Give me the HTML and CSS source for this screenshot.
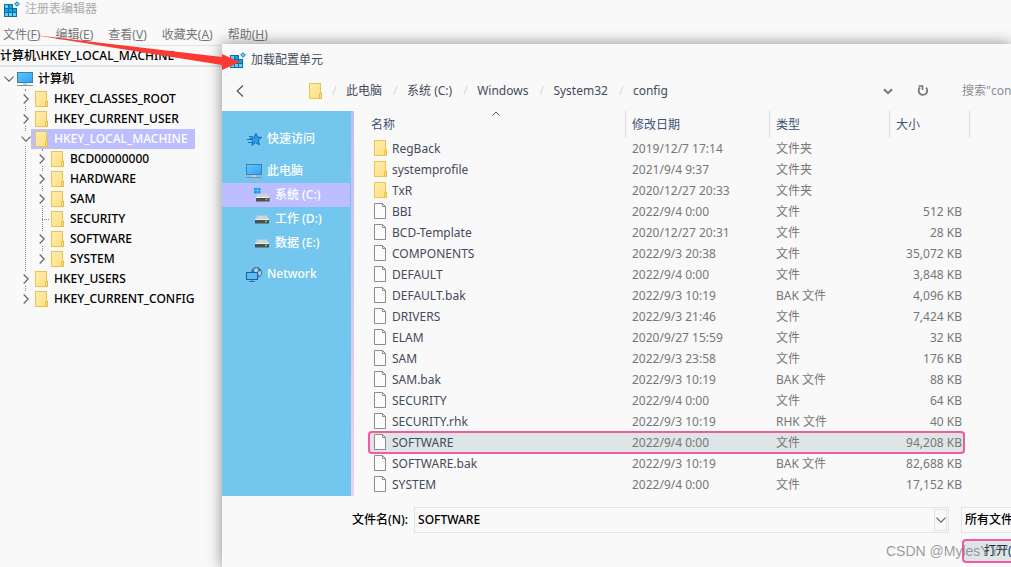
FILE: index.html
```html
<!DOCTYPE html>
<html lang="zh-CN">
<head>
<meta charset="utf-8">
<title>注册表编辑器</title>
<link rel="stylesheet" href="styles.css">
</head>
<body>
<svg class="defs" aria-hidden="true">
  <defs>
    <linearGradient id="fold" x1="0" y1="0" x2="1" y2="1"><stop offset="0" stop-color="#ffedae"/><stop offset="1" stop-color="#ffdf80"/></linearGradient>
    <linearGradient id="scr" x1="0" y1="0" x2="1" y2="1"><stop offset="0" stop-color="#5fc8ff"/><stop offset="1" stop-color="#2ba4f5"/></linearGradient>
    <symbol id="i-folder" viewBox="0 0 14 16">
      <rect x="0.5" y="0.5" width="11" height="15" fill="url(#fold)" stroke="#eac54f"/>
      <path d="M10.5 15.5v-4.5l2-1v5.5z" fill="#ffe48f" stroke="#e6bd3f"/>
    </symbol>
    <symbol id="i-file" viewBox="0 0 12 16">
      <path d="M0.5 0.5h8l3 3v12h-11z" fill="#fcfcfc" stroke="#8c8c8c"/>
      <path d="M8.5 0.5v3h3" fill="none" stroke="#8c8c8c"/>
    </symbol>
    <symbol id="i-pc" viewBox="0 0 16 15">
      <rect x="0.5" y="0.5" width="15" height="10" fill="url(#scr)" stroke="#4a7ea0"/>
      <path d="M6 11h4v2h-4z" fill="#bcd3df"/><path d="M0 13.5h16" stroke="#7d929f"/>
    </symbol>
    <symbol id="i-reg" viewBox="0 0 16 16">
      <rect x="0" y="3" width="13" height="13" fill="#0b6fa0"/>
      <path d="M1 4h3v3H1zM5 4h3v3H5zM1 8h3v3H1zM5 8h3v3H5zM9 8h3v3H9zM1 12h3v3H1zM5 12h3v3H5zM9 12h3v3H9z" fill="#12a5dd"/>
      <path d="M1 4h3v3H1zM1 12h3v3H1zM5 12h3v3H5zM9 12h3v3H9z" fill="#5ed3fb"/>
      <path d="M9 2h5v5H9z" fill="#f9f9f9"/>
      <path d="M13 0.700l2.300 2.300-2.300 2.300-2.300-2.300z" fill="#5ed3fb" stroke="#0d7cb0"/>
    </symbol>
    <symbol id="i-drive" viewBox="0 0 14 9">
      <path d="M2.500 0.500h9l2.500 4H0z" fill="#d0d3d4"/><rect x="0" y="4" width="14" height="4.500" rx="0.500" fill="#4a4f51"/><path d="M0 4.500h14" stroke="#f0f0f0"/>
      <path d="M10 6.500h2" stroke="#54e552" stroke-width="1.500"/>
    </symbol>
    <symbol id="i-cdrive" viewBox="0 0 16 14">
      <path d="M4 5.500h9l2.500 4H2z" fill="#d0d3d4"/><rect x="2" y="9" width="13.500" height="4.500" rx="0.500" fill="#4a4f51"/><path d="M2 9.500h13.500" stroke="#f0f0f0"/>
      <path d="M0 0h3v2.500H0zM3.500 0h3v2.500h-3zM0 3h3v2.500H0zM3.500 3h3v2.500h-3z" fill="#00a4ef"/>
      <path d="M11.500 11.500h2" stroke="#54e552" stroke-width="1.500"/>
    </symbol>
    <symbol id="i-star" viewBox="0 0 15 13">
      <path d="M9 0.500l1.400 3.700 4.100.2-3.200 2.500 1 4.900-3.700-2.300-3.700 2.800 1.100-4.600-3.200-2.300 4.300-.6z" fill="#2f9ef0" stroke="#0968b0"/>
      <path d="M2 3.500h4M0 6.500h4M1 9.500h4" stroke="#1478c4"/>
    </symbol>
    <symbol id="i-net" viewBox="0 0 16 15">
      <circle cx="10.500" cy="5.500" r="5" fill="#4187ad" stroke="#356f91"/>
      <path d="M8 2l3-1 1 3-3 2zM12 5l3-1v3l-2 2z" fill="#b5dcec"/>
      <rect x="0.500" y="5.500" width="11" height="7" fill="#59bdf7" stroke="#235d91"/><path d="M3 14.500h6M6 12v2" stroke="#476f87"/>
    </symbol>
    <symbol id="i-right" viewBox="0 0 6 10"><path d="M0.700 0.500l4.500 4.500-4.500 4.500" fill="none" stroke="#666" stroke-width="1.200"/></symbol>
    <symbol id="i-down" viewBox="0 0 10 6"><path d="M0.500 0.700l4.500 4.500 4.500-4.500" fill="none" stroke="#666" stroke-width="1.200"/></symbol>
  </defs>
</svg>

<main class="editor">
  <header class="titlebar"><svg class="ic16"><use href="#i-reg"/></svg><span>注册表编辑器</span></header>
  <nav class="menu">
    <button>文件(<u>F</u>)</button><button>编辑(<u>E</u>)</button><button>查看(<u>V</u>)</button><button>收藏夹(<u>A</u>)</button><button>帮助(<u>H</u>)</button>
  </nav>
  <input class="address" aria-label="地址" value="计算机\HKEY_LOCAL_MACHINE">
  <ul class="tree">
    <li><div class="node root"><button class="tw" aria-label="折叠"><svg class="down"><use href="#i-down"/></svg></button><svg class="pc"><use href="#i-pc"/></svg><span>计算机</span></div>
      <ul>
        <li><div class="node"><button class="tw" aria-label="展开"><svg class="right"><use href="#i-right"/></svg></button><svg class="folder"><use href="#i-folder"/></svg><span>HKEY_CLASSES_ROOT</span></div></li>
        <li><div class="node"><button class="tw" aria-label="展开"><svg class="right"><use href="#i-right"/></svg></button><svg class="folder"><use href="#i-folder"/></svg><span>HKEY_CURRENT_USER</span></div></li>
        <li><div class="node"><button class="tw" aria-label="折叠"><svg class="down"><use href="#i-down"/></svg></button><div class="picked"><svg class="folder"><use href="#i-folder"/></svg><span>HKEY_LOCAL_MACHINE</span></div></div>
          <ul>
            <li><div class="node"><button class="tw" aria-label="展开"><svg class="right"><use href="#i-right"/></svg></button><svg class="folder"><use href="#i-folder"/></svg><span>BCD00000000</span></div></li>
            <li><div class="node"><button class="tw" aria-label="展开"><svg class="right"><use href="#i-right"/></svg></button><svg class="folder"><use href="#i-folder"/></svg><span>HARDWARE</span></div></li>
            <li><div class="node"><button class="tw" aria-label="展开"><svg class="right"><use href="#i-right"/></svg></button><svg class="folder"><use href="#i-folder"/></svg><span>SAM</span></div></li>
            <li><div class="node"><i class="leaf"></i><svg class="folder"><use href="#i-folder"/></svg><span>SECURITY</span></div></li>
            <li><div class="node"><button class="tw" aria-label="展开"><svg class="right"><use href="#i-right"/></svg></button><svg class="folder"><use href="#i-folder"/></svg><span>SOFTWARE</span></div></li>
            <li><div class="node"><button class="tw" aria-label="展开"><svg class="right"><use href="#i-right"/></svg></button><svg class="folder"><use href="#i-folder"/></svg><span>SYSTEM</span></div></li>
          </ul></li>
        <li><div class="node"><button class="tw" aria-label="展开"><svg class="right"><use href="#i-right"/></svg></button><svg class="folder"><use href="#i-folder"/></svg><span>HKEY_USERS</span></div></li>
        <li><div class="node"><button class="tw" aria-label="展开"><svg class="right"><use href="#i-right"/></svg></button><svg class="folder"><use href="#i-folder"/></svg><span>HKEY_CURRENT_CONFIG</span></div></li>
      </ul></li>
  </ul>
</main>

<section class="dialog" role="dialog" aria-label="加载配置单元">
  <header class="dialog-title"><svg class="ic16"><use href="#i-reg"/></svg><span>加载配置单元</span></header>
  <div class="navbar">
    <button class="back" aria-label="返回"><svg viewBox="0 0 8 12"><path d="M7 0.500L1.200 6L7 11.500" fill="none" stroke="#555" stroke-width="1.200"/></svg></button>
    <svg class="folder"><use href="#i-folder"/></svg>
    <ol class="crumbs"><li><a href="#">此电脑</a></li><li><a href="#">系统 (C:)</a></li><li><a href="#">Windows</a></li><li><a href="#">System32</a></li><li><a href="#">config</a></li></ol>
    <button class="hist" aria-label="历史"><svg viewBox="0 0 10 7"><path d="M1 1.200l4 4 4-4" fill="none" stroke="#777" stroke-width="2"/></svg></button>
    <button class="reload" aria-label="刷新"><svg viewBox="0 0 12 12"><path d="M3 2.500A4.300 4.300 0 1 0 9 2.600" fill="none" stroke="#777" stroke-width="1.800"/><path d="M1.500 1h4v4" fill="none" stroke="#777" stroke-width="1.600"/></svg></button>
    <input class="search" aria-label="搜索" placeholder='搜索"config"'>
  </div>
  <div class="content">
    <nav class="places">
      <a href="#" class="place"><svg class="star"><use href="#i-star"/></svg>快速访问</a>
      <div class="group">
        <a href="#" class="place"><svg class="pc"><use href="#i-pc"/></svg>此电脑</a>
        <a href="#" class="place sub current"><svg class="cdrive"><use href="#i-cdrive"/></svg>系统 (C:)</a>
        <a href="#" class="place sub"><svg class="drive"><use href="#i-drive"/></svg>工作 (D:)</a>
        <a href="#" class="place sub"><svg class="drive"><use href="#i-drive"/></svg>数据 (E:)</a>
      </div>
      <a href="#" class="place"><svg class="pc"><use href="#i-net"/></svg>Network</a>
    </nav>
    <div class="files">
      <table>
        <colgroup><col class="c-name"><col class="c-date"><col class="c-type"><col class="c-size"></colgroup>
        <thead><tr><th>名称<svg class="sort" viewBox="0 0 8 5"><path d="M0.500 4.500L4 1l3.500 3.500" fill="none" stroke="#555"/></svg></th><th>修改日期</th><th>类型</th><th>大小</th></tr></thead>
        <tbody>
          <tr><td><svg class="folder"><use href="#i-folder"/></svg>RegBack</td><td>2019/12/7 17:14</td><td>文件夹</td><td></td></tr>
          <tr><td><svg class="folder"><use href="#i-folder"/></svg>systemprofile</td><td>2021/9/4 9:37</td><td>文件夹</td><td></td></tr>
          <tr><td><svg class="folder"><use href="#i-folder"/></svg>TxR</td><td>2020/12/27 20:33</td><td>文件夹</td><td></td></tr>
          <tr><td><svg class="file"><use href="#i-file"/></svg>BBI</td><td>2022/9/4 0:00</td><td>文件</td><td>512 KB</td></tr>
          <tr><td><svg class="file"><use href="#i-file"/></svg>BCD-Template</td><td>2020/12/27 20:31</td><td>文件</td><td>28 KB</td></tr>
          <tr><td><svg class="file"><use href="#i-file"/></svg>COMPONENTS</td><td>2022/9/3 20:38</td><td>文件</td><td>35,072 KB</td></tr>
          <tr><td><svg class="file"><use href="#i-file"/></svg>DEFAULT</td><td>2022/9/4 0:00</td><td>文件</td><td>3,848 KB</td></tr>
          <tr><td><svg class="file"><use href="#i-file"/></svg>DEFAULT.bak</td><td>2022/9/3 10:19</td><td>BAK 文件</td><td>4,096 KB</td></tr>
          <tr><td><svg class="file"><use href="#i-file"/></svg>DRIVERS</td><td>2022/9/3 21:46</td><td>文件</td><td>7,424 KB</td></tr>
          <tr><td><svg class="file"><use href="#i-file"/></svg>ELAM</td><td>2020/9/27 15:59</td><td>文件</td><td>32 KB</td></tr>
          <tr><td><svg class="file"><use href="#i-file"/></svg>SAM</td><td>2022/9/3 23:58</td><td>文件</td><td>176 KB</td></tr>
          <tr><td><svg class="file"><use href="#i-file"/></svg>SAM.bak</td><td>2022/9/3 10:19</td><td>BAK 文件</td><td>88 KB</td></tr>
          <tr><td><svg class="file"><use href="#i-file"/></svg>SECURITY</td><td>2022/9/4 0:00</td><td>文件</td><td>64 KB</td></tr>
          <tr><td><svg class="file"><use href="#i-file"/></svg>SECURITY.rhk</td><td>2022/9/3 10:19</td><td>RHK 文件</td><td>40 KB</td></tr>
          <tr class="selected"><td><svg class="file"><use href="#i-file"/></svg>SOFTWARE</td><td>2022/9/4 0:00</td><td>文件</td><td>94,208 KB</td></tr>
          <tr><td><svg class="file"><use href="#i-file"/></svg>SOFTWARE.bak</td><td>2022/9/3 10:19</td><td>BAK 文件</td><td>82,688 KB</td></tr>
          <tr><td><svg class="file"><use href="#i-file"/></svg>SYSTEM</td><td>2022/9/4 0:00</td><td>文件</td><td>17,152 KB</td></tr>
        </tbody>
      </table>
    </div>
  </div>
  <footer class="footer">
    <div class="namerow">
      <label for="fname">文件名(N):</label>
      <div class="combo"><input id="fname" value="SOFTWARE"><button aria-label="展开列表"><svg class="down"><use href="#i-down"/></svg></button></div>
      <select class="filter" aria-label="文件类型"><option>所有文件</option></select>
    </div>
    <button class="open">打开(<u>O</u>)</button>
  </footer>
</section>

<svg class="arrow" viewBox="0 0 210 40" aria-hidden="true"><path d="M0 0L188 22V19L206 27L188 35V30Z" fill="#fb3a34"/></svg>
<span class="watermark">CSDN @MylesYYY</span>
</body>
</html>
```
FILE: styles.css
```css
* { box-sizing: border-box; }
body {
  margin: 0;
  min-height: 100vh;
  position: relative;
  overflow: hidden;
  background: #f9f9f9;
  color: #000;
  font: 12px/20px "Noto Sans", "Noto Sans CJK SC", sans-serif;
}
button, input, select { font: inherit; color: inherit; background: none; border: 0; padding: 0; margin: 0; }
a { color: inherit; text-decoration: none; }
ul, ol { list-style: none; margin: 0; padding: 0; }
svg { display: block; flex: none; }
.defs { position: absolute; width: 0; height: 0; }
.ic16 { width: 16px; height: 16px; }
.folder { width: 14px; height: 16px; }
.file { width: 12px; height: 16px; }
.pc { width: 16px; height: 15px; }
.right { width: 6px; height: 10px; }
.down { width: 10px; height: 6px; }

.titlebar { display: flex; align-items: center; gap: 5px; height: 18px; padding-left: 4px; color: #aaa; }
.menu { display: flex; gap: 15px; height: 27px; padding: 6px 3px 0; align-items: center; color: #777; }
.address { display: block; width: 100%; height: 22px; padding-bottom: 1px; border: solid #dde5e7; border-width: 1px 0 2px; font-weight: 500; }

.tree { padding-top: 2px; font-weight: 500; }
.tree ul { position: relative; padding-left: 16px; }
.tree > li > ul { padding-left: 17px; }
.tree ul::before {
  content: "";
  position: absolute;
  left: 25px;
  top: 0;
  bottom: 10px;
  border-left: 1px dotted #888;
}
.node { position: relative; display: flex; align-items: center; height: 20px; }
.node > span { padding-left: 5px; }
.tw { display: flex; align-items: center; justify-content: center; width: 14px; height: 14px; margin: 0 1px 0 2px; background: #f9f9f9; }
.tree ul .tw { margin: 0 2px 0 2px; }
.leaf { width: 7px; margin: 0 2px 0 9px; border-top: 1px dotted #888; }
.picked { display: flex; align-items: center; height: 20px; margin-left: -4px; padding: 0 7px 0 4px; gap: 5px; background: #bcbeff; color: #fff; }

.dialog {
  position: absolute;
  left: 222px;
  right: 0;
  top: 44px;
  bottom: 0;
  display: flex;
  flex-direction: column;
  background: #f9f9f9;
  box-shadow: 0 0 14px rgba(0, 0, 0, 0.45);
  color: #444b5a;
}
.dialog-title { display: flex; align-items: center; gap: 5px; height: 31px; padding-left: 8px; }
.navbar { display: flex; align-items: center; height: 36px; padding: 0 0 4px 14px; }
.back { width: 8px; margin-right: 65px; }
.crumbs { display: flex; flex: 1; gap: 2px; }
.crumbs li::before { content: "/"; display: inline-block; width: 14px; padding-left: 9px; color: #d0dcdc; }
.hist { width: 10px; margin-right: 24px; }
.reload { width: 12px; margin-right: 33px; }
.search { width: 49px; }
.search::placeholder { color: #8b8d95; opacity: 1; }

.content { display: flex; height: 385px; }
.places {
  width: 132px;
  padding-top: 16px;
  background: linear-gradient(#bcbeff, #f3cfea) right / 3px 100% no-repeat #73c7ee;
  color: #fff;
  font-weight: 500;
}
.place { display: flex; align-items: center; gap: 5px; height: 24px; margin-right: 4px; padding-left: 24px; }
.group { padding: 8px 0 7px; }
.sub { padding-left: 33px; gap: 6px; }
.sub.current { padding-left: 32px; gap: 5px; background: #bcbeff; }
.star { width: 15px; height: 13px; margin-left: 1px; }
.drive { width: 14px; height: 9px; }
.cdrive { width: 16px; height: 14px; }

.files { flex: 1; padding-left: 14px; }
table { width: 602px; table-layout: fixed; border-collapse: separate; border-spacing: 0; white-space: nowrap; }
.c-name { width: 258px; }
.c-date { width: 144px; }
.c-type { width: 120px; }
.c-size { width: 80px; }
th { height: 27px; padding: 0 0 0 6px; border-right: 1px solid #dcdcdc; font-weight: 400; text-align: left; color: #3e5273; position: relative; }
th:first-child { padding-left: 3px; }
.sort { position: absolute; left: 124px; top: 0; width: 8px; height: 5px; }
td { height: 21px; padding: 0 0 0 6px; line-height: 20px; color: #777; }
td:first-child { color: #444b5a; }
td:last-child { padding: 0 8px 0 0; text-align: right; }
td svg { display: inline-block; vertical-align: middle; margin-bottom: 2px; }
td .folder { margin-right: 4px; }
td .file { margin-right: 6px; }
.selected { position: relative; background: linear-gradient(#dde5e6, #dde5e6) left / 597px 100% no-repeat; }
.selected td:first-child::after { content: ""; position: absolute; inset: -1px 5px -1px 0; border: 2px solid #f25aa2; border-radius: 4px; }

.footer { padding-top: 11px; color: #000; }
.namerow { display: flex; align-items: center; padding-left: 130px; font-weight: 500; }
.combo { display: flex; flex: 1; align-items: center; height: 26px; margin: 0 12px 0 6px; padding: 0 1px 0 3px; border: 1px solid #dde5e7; }
.combo input { flex: 1; min-width: 0; }
.combo button { display: flex; align-items: center; justify-content: center; width: 13px; height: 22px; border: 1px solid #dde5e7; }
.filter { width: 50px; height: 26px; padding-left: 3px; border: 1px solid #dde5e7; border-right: 0; appearance: none; text-overflow: clip; }
.open { display: block; width: 49px; height: 24px; margin: 6px 0 0 auto; padding-left: 20px; border: 2px solid #f25aa2; border-right: 0; border-radius: 4px 0 0 4px; background: #dde5e6; color: #222c3c; text-align: left; white-space: nowrap; overflow: hidden; }

.arrow { position: absolute; left: 34px; top: 35px; width: 210px; height: 40px; }
.watermark { position: absolute; left: 886px; top: 541px; font: 14px/20px "Liberation Sans", sans-serif; color: #777b; }
```
